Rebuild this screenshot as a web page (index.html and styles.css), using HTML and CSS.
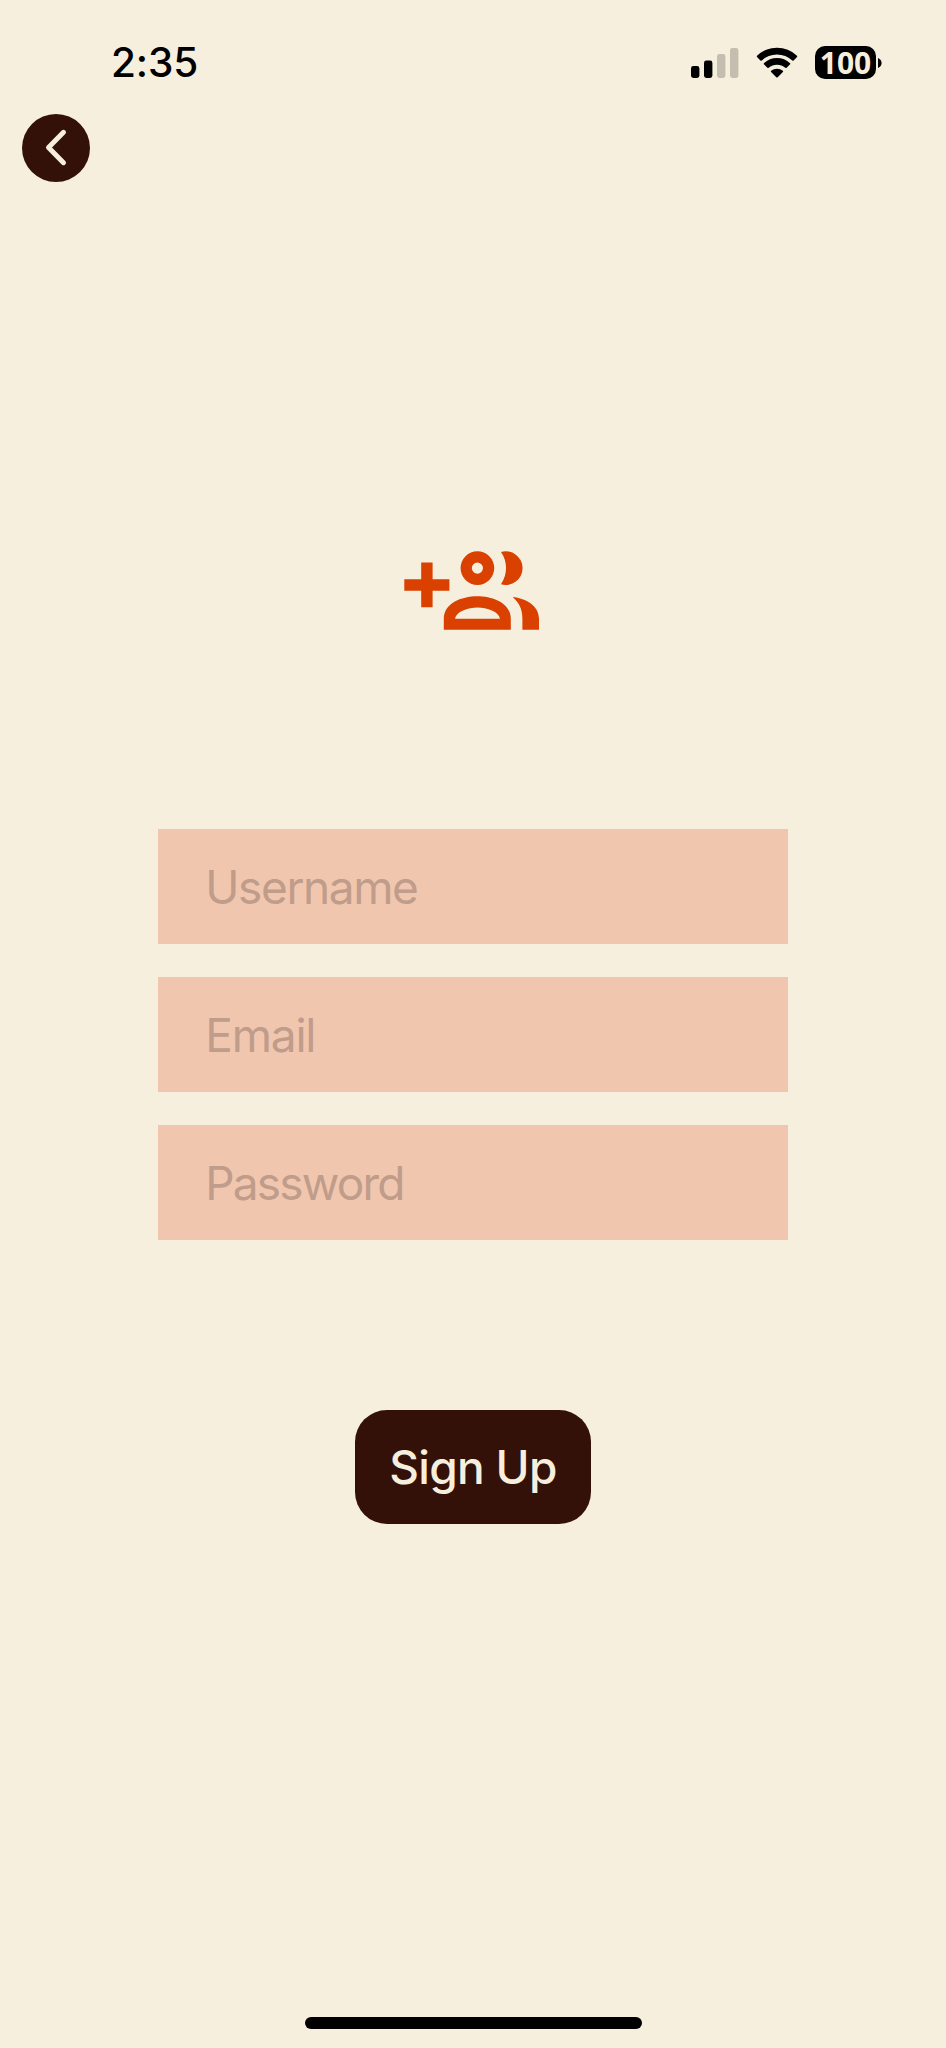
FILE: index.html
```html
<!DOCTYPE html>
<html lang="en">
<head>
<meta charset="utf-8">
<title>Sign Up</title>
<link rel="stylesheet" href="styles.css">
</head>
<body>
<div class="screen">
  <header class="status">
    <span class="time">2:35</span>
    <div class="indicators">
      <svg class="signal" viewBox="0 0 48 32" width="48" height="32">
        <rect x="0" y="19" width="8.4" height="12" rx="2.4"/>
        <rect x="13" y="13.5" width="8.4" height="17.5" rx="2.4"/>
        <g class="off">
          <rect x="26" y="7" width="8.4" height="24" rx="2.4"/>
          <rect x="39" y="1" width="8.4" height="30" rx="2.4"/>
        </g>
      </svg>
      <svg class="wifi" viewBox="0 0 42 32" width="42" height="32">
        <path d="M1 8.7A29 29 0 0 1 41 8.7Q41.5 9.3 41 9.9L37.6 13.5Q37 14 36.3 13.5A22.5 22.5 0 0 0 5.7 13.5Q5 14 4.4 13.5L1 9.9Q0.5 9.3 1 8.7Z"/>
        <path d="M7.9 16.2A19 19 0 0 1 34.1 16.2Q34.6 16.8 34.1 17.3L30.6 20.8Q30 21.3 29.3 20.8A12.5 12.5 0 0 0 12.7 20.8Q12 21.3 11.4 20.8L7.9 17.3Q7.4 16.8 7.9 16.2Z"/>
        <path d="M15.1 23.8A9.5 9.5 0 0 1 26.9 23.8Q27.5 24.4 26.9 25L21.7 30.2Q21 30.8 20.3 30.2L15.1 25Q14.5 24.4 15.1 23.8Z"/>
      </svg>
      <div class="battery">
        <span class="level">100</span>
        <svg viewBox="0 0 4 10" width="4" height="10"><path d="M0 0Q3.6 1.6 3.6 5T0 10Z"/></svg>
      </div>
    </div>
  </header>

  <button class="back" aria-label="Back">
    <svg viewBox="0 0 68 68" width="68" height="68"><path d="M41.5 18.3L26.5 33.5L41.5 48.7"/></svg>
  </button>

  <main class="content">
    <svg class="group-add" viewBox="403 550 138 82" width="138" height="82">
      <path d="M421.2 562.6H432.6V579.2H449.4V590.7H432.6V607.2H421.2V590.7H404.3V579.2H421.2Z"/>
      <path fill-rule="evenodd" d="M477.4 551.3a16.8 16.8 0 1 1 0 33.6a16.8 16.8 0 1 1 0-33.6ZM477.4 562.5a5.6 5.6 0 1 0 0 11.2a5.6 5.6 0 1 0 0-11.2Z"/>
      <path d="M501 552A16.8 16.8 0 1 1 501 584.2Q506 577 506 568.1T501 552Z"/>
      <path fill-rule="evenodd" d="M443.8 629.8V618.7C443.8 603.5 461 596.2 477.3 596.2S510.8 603.5 510.8 618.7V629.8ZM455 618.7H500C499 611.5 487 607.4 477.5 607.4S456 611.5 455 618.7Z"/>
      <path d="M512.7 596.9C526 598.4 539 605.5 539 618.7V629.8H522.4V618.7C522.4 609 519 602.5 512.7 596.9Z"/>
    </svg>

    <form class="form">
      <input class="field username" type="text" placeholder="Username">
      <input class="field email" type="text" placeholder="Email">
      <input class="field password" type="text" placeholder="Password">
    </form>

    <button class="submit">Sign Up</button>
  </main>

  <div class="home"></div>
</div>
</body>
</html>
```
FILE: styles.css
```css
* { box-sizing: border-box; }

body {
  margin: 0;
  background: #f6efdd;
  font-family: Inter, "Liberation Sans", sans-serif;
}

button, input { font-family: inherit; border: 0; padding: 0; }
svg { display: block; }

.screen {
  display: flex;
  flex-direction: column;
  width: 946px;
  height: 2048px;
  padding-bottom: 19.5px;
  background: #f6efdd;
}

.status {
  display: flex;
  justify-content: space-between;
  align-items: center;
  height: 114px;
  padding: 11px 64px 0 111px;
}

.time {
  padding-top: 1px;
  font-size: 40.5px;
  font-weight: 550;
  line-height: 48px;
  letter-spacing: -0.1px;
}

.indicators { display: flex; align-items: center; }
.off { opacity: 0.2; }
.wifi { margin-left: 17px; }

.battery {
  display: flex;
  align-items: center;
  gap: 2px;
  margin-left: 17px;
}

.level {
  width: 61px;
  height: 33px;
  border-radius: 10px;
  background: #000;
  color: #f6efdd;
  font-family: "Open Sans", "Noto Sans", sans-serif;
  font-size: 30px;
  font-weight: 700;
  line-height: 33px;
  text-align: center;
}

.back {
  width: 68px;
  height: 68px;
  margin-left: 22px;
  border-radius: 50%;
  background: #331008;
}

.back path {
  fill: none;
  stroke: #f6efdd;
  stroke-width: 5;
  stroke-linecap: round;
  stroke-linejoin: round;
}

.content {
  display: flex;
  flex: 1;
  flex-direction: column;
  align-items: center;
  padding-top: 368px;
}

.group-add { fill: #da4000; margin-left: -2px; }

.form {
  display: flex;
  flex-direction: column;
  gap: 33.4px;
  width: 630.5px;
  margin-top: 197px;
}

.field {
  height: 114.6px;
  padding: 1px 47.5px 0;
  border-radius: 0;
  background: #f1c6af;
  font-size: 46px;
}

.username { letter-spacing: -1.4px; }
.email { letter-spacing: -1.2px; }
.password { letter-spacing: -1.8px; }

.field::placeholder { color: #c09c8a; opacity: 1; }

.submit {
  width: 236px;
  height: 114px;
  margin-top: 170.4px;
  border-radius: 32px;
  background: #331008;
  color: #f6efdd;
  font-size: 46px;
  font-weight: 500;
  letter-spacing: -0.7px;
}

.home {
  width: 337px;
  height: 12px;
  margin: 0 auto;
  border-radius: 6px;
  background: #000;
}
```
